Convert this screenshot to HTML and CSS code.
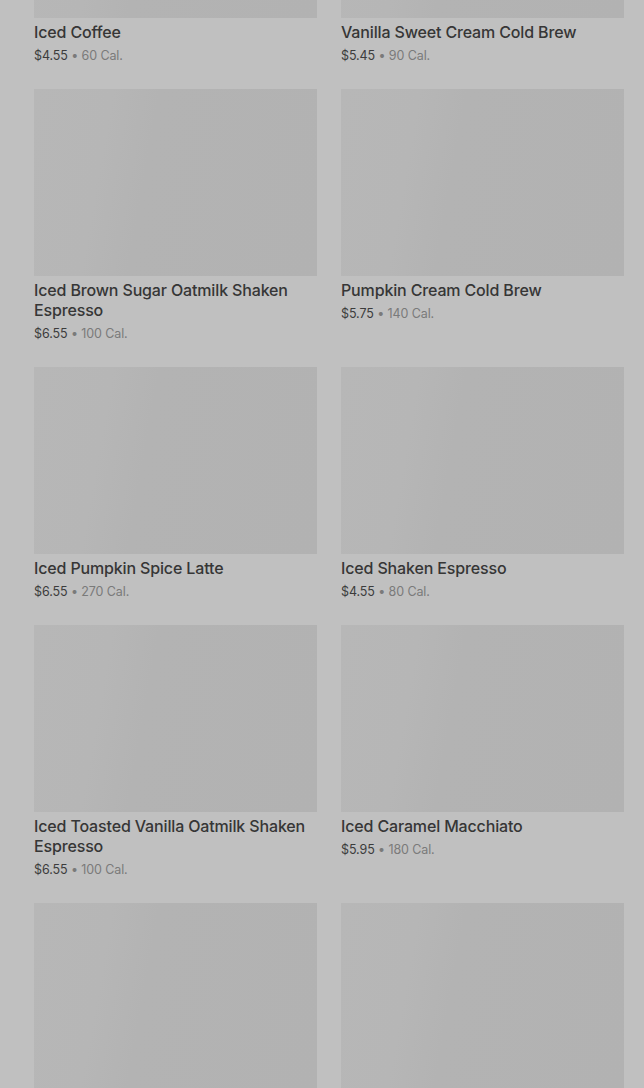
FILE: index.html
```html
<!DOCTYPE html>
<html>

<head>
	<title>Cold Coffees</title>
	<meta charset="UTF-8">
	<link rel="stylesheet" href="styles.css">
</head>

<body>
	<div class="menu-list">
		<div class="product">
			<div class="product-img"></div>
			<div class="product-name">Iced Coffee</div>
			<div class="product-info"><span class="price">$4.55</span> • 60 Cal.</div>
		</div>
		<div class="product">
			<div class="product-img"></div>
			<div class="product-name">Vanilla Sweet Cream Cold Brew</div>
			<div class="product-info"><span class="price">$5.45</span> • 90 Cal.</div>
		</div>
		<div class="product">
			<div class="product-img"></div>
			<div class="product-name">Iced Brown Sugar Oatmilk Shaken Espresso</div>
			<div class="product-info"><span class="price">$6.55</span> • 100 Cal.</div>
		</div>
		<div class="product">
			<div class="product-img"></div>
			<div class="product-name">Pumpkin Cream Cold Brew</div>
			<div class="product-info"><span class="price">$5.75</span> • 140 Cal.</div>
		</div>
		<div class="product">
			<div class="product-img"></div>
			<div class="product-name">Iced Pumpkin Spice Latte</div>
			<div class="product-info"><span class="price">$6.55</span> • 270 Cal.</div>
		</div>
		<div class="product">
			<div class="product-img"></div>
			<div class="product-name">Iced Shaken Espresso</div>
			<div class="product-info"><span class="price">$4.55</span> • 80 Cal.</div>
		</div>
		<div class="product">
			<div class="product-img"></div>
			<div class="product-name">Iced Toasted Vanilla Oatmilk Shaken Espresso</div>
			<div class="product-info"><span class="price">$6.55</span> • 100 Cal.</div>
		</div>
		<div class="product">
			<div class="product-img"></div>
			<div class="product-name">Iced Caramel Macchiato</div>
			<div class="product-info"><span class="price">$5.95</span> • 180 Cal.</div>
		</div>
		<div class="product">
			<div class="product-img"></div>
		</div>
		<div class="product">
			<div class="product-img"></div>
		</div>
	</div>
</body>

</html>
```

FILE: styles.css
```css
html,
body {
	margin: 0;
	background: #c0c0c0;
	font-family: "Inter", "Liberation Sans", sans-serif;
	overflow: hidden;
}

.menu-list {
	display: grid;
	grid-template-columns: 283px 283px;
	column-gap: 24px;
	row-gap: 24px;
	align-items: start;
	padding: 0 20px 0 34px;
	margin-top: -169px;
}

.product-img {
	height: 187px;
	background: #b3b3b3;
	background-image: linear-gradient(100deg, #b7b7b7 0%, #b6b6b6 25%, #b3b3b3 40%, #b2b2b2 100%);
}

.product-name {
	margin-top: 4px;
	font-size: 16px;
	line-height: 20px;
	font-weight: 500;
	letter-spacing: -0.15px;
	color: #363636;
}

.product-info {
	margin-top: 4px;
	margin-bottom: -1px;
	font-size: 12.5px;
	line-height: 20px;
	color: #7a7a7a;
	letter-spacing: -0.1px;
}

.price {
	color: #3c3c3c;
}
```
